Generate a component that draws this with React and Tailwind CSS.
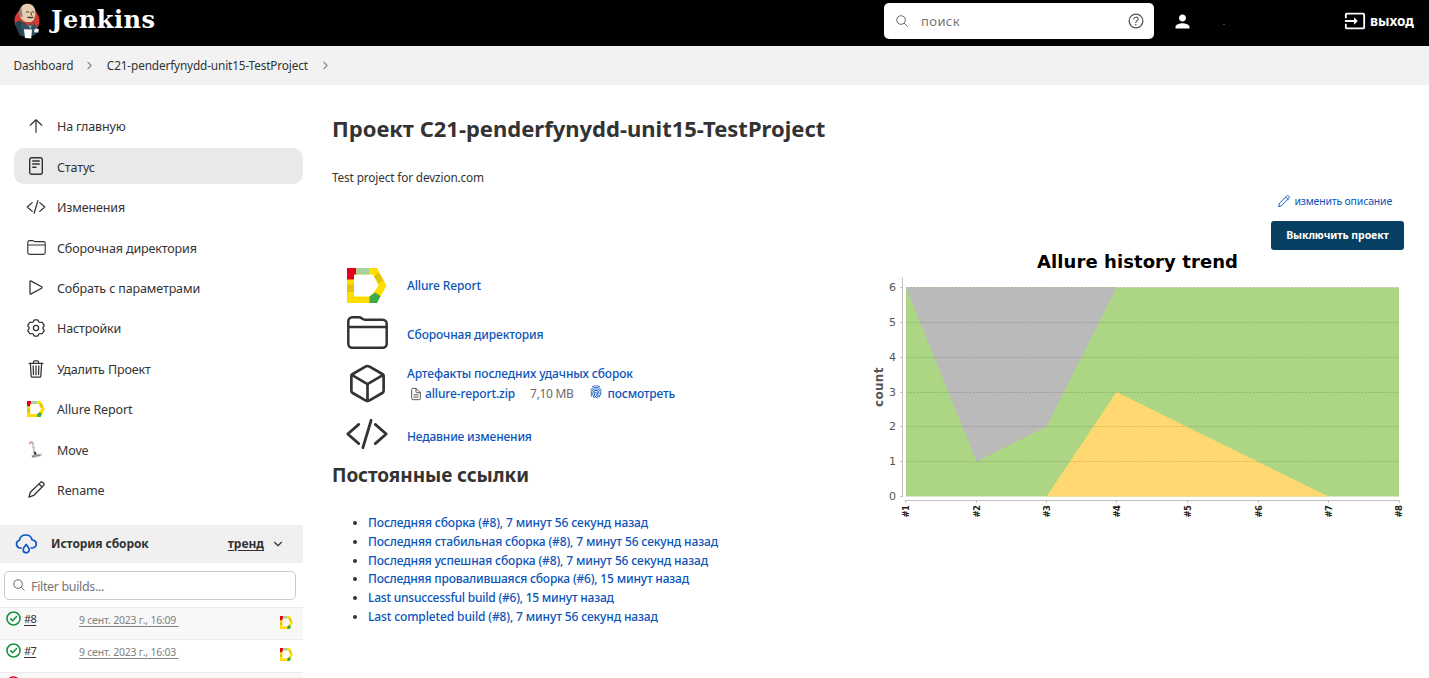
import {
  IoCodeSlashOutline,
  IoCubeOutline,
  IoDocumentTextOutline,
  IoFingerPrint,
  IoHelpCircleOutline,
  IoSearchOutline,
  IoTrashOutline,
} from "react-icons/io5";
import { MdInput, MdPerson } from "react-icons/md";
import { ChevronDown, ChevronRight } from "lucide-react";

function JenkinsLogo() {
  return (
    <svg className="h-9 w-[26px] shrink-0" viewBox="0 0 26 36">
      <ellipse cx="13" cy="17.500" rx="12.500" ry="12.500" fill="#d33833" />
      <path d="M1 21.500 6.500 18l6.500 3 6-2.500 4 5.500-1.500 7.500-6 2.500-8-1Z" fill="#335061" />
      <path d="M1 20.500c2-2 4-3 6-2.500l1 9 1 6.500-4-2Z" fill="#26404f" />
      <path d="M5.500 8C6.500 3 10 .5 13.800.7c5 .3 7.700 3.800 7.600 8.800 0 5-1.400 9.800-6.400 9.800C9 19.500 4.800 14.500 5.500 8Z" fill="#e8cdae" />
      <path d="M4.800 8.500 7.500 4l.3 5L9 13.500l-2 .5C4.800 12 4.500 10 4.800 8.500Z" fill="#8d857b" />
      <path d="M12 9.300q1.800-1.400 3.300 0M17.300 9.300q1.500-1.200 2.800 0M16.800 9.500l1 3.200" fill="none" stroke="#4b3d37" strokeWidth="1" />
      <path d="M12.800 14.700q2-2 3.700-.6 2-1.400 3.500.6l-3.500.8Z" fill="#4a4039" />
      <path d="m12 18.800 4 1.300 3.200-1.800.8 4-3.800-1-3.700 1.500Z" fill="#d33833" />
      <path d="m14 22.500 2.500 3.500 1.500-3.500Z" fill="#8fa5b0" />
      <path d="m10 26.300 8 .2-.8 9-6.200-.5Z" fill="#fff" />
      <path d="M20.500 26q3-1.500 4.500.8l-1 3-4-.5Z" fill="#f0eeec" />
    </svg>
  );
}

function AllureIcon({ className }) {
  return (
    <svg className={className} viewBox="0 0 40 35" preserveAspectRatio="none">
      <path fillRule="evenodd" d="M0 0H30L39.500 17.500 30 35H0ZM7 6.500V28.500H22.500L26.500 25 31.500 17.500 26 6.500Z" fill="#ffdd00" />
      <path d="M0 0H9.200V6.500H7V11.500H0Z" fill="#e2001a" />
      <path d="M9.200 0H22V6.500H9.200Z" fill="#a5d3a0" />
      <path d="M0 16.500H7V24H0Z" fill="#e0c210" />
      <path d="m27 8.500 4.500-4 5 8-4.300 2.700Z" fill="#e0c210" />
      <path d="M22.500 28.500 28 24.500 33.500 28 30 35H22.500Z" fill="#3dab49" />
    </svg>
  );
}

function ArrowUpIcon() {
  return (
    <svg className="h-[14px] w-[14px]" viewBox="0 0 14 14" fill="none" stroke="currentColor" strokeWidth="1.200" strokeLinecap="round" strokeLinejoin="round">
      <path d="M1.200 6.200 7 .8l5.800 5.400M7 1v12.300" />
    </svg>
  );
}

function StatusIcon() {
  return (
    <svg className="h-[18px] w-[14px]" viewBox="0 0 14 18" fill="none" stroke="currentColor" strokeWidth="1.400" strokeLinecap="round">
      <rect x=".7" y=".7" width="12.600" height="16.600" rx="2" />
      <path d="M3.700 4h6.600M3.700 7h6.600M3.700 10.200h3.300" />
    </svg>
  );
}

function FolderIcon({ className }) {
  return (
    <svg className={className} viewBox="0 0 41 33" fill="none" stroke="currentColor" strokeWidth="2.500" strokeLinejoin="round">
      <path d="M1.300 11V5.300a4 4 0 0 1 4-4h6.200q2 0 3.500 1.200 1.500 1.200 3.200 1.200h17.500a4 4 0 0 1 4 4v20a4 4 0 0 1-4 4H5.300a4 4 0 0 1-4-4V11h38.400" />
    </svg>
  );
}

function PlayIcon() {
  return (
    <svg className="h-[15px] w-[14px]" viewBox="0 0 14 15" fill="none" stroke="currentColor" strokeWidth="1.300" strokeLinejoin="round">
      <path d="M1 1.800v11.400q0 1.300 1.200.7L12.600 8.200q1.100-.7 0-1.400L2.200 1.100Q1 .5 1 1.800Z" />
    </svg>
  );
}

function GearIcon() {
  return (
    <svg className="h-[18px] w-[18px] shrink-0" viewBox="0 0 18 18" fill="none" stroke="currentColor" strokeWidth="1.300" strokeLinejoin="round">
      <path d="M7.600.8h2.800q1 .3 1.200 2l1.300.7q1.600-.7 2.500 0l1.700 2.700q.2 1-1.100 2.100v1.400q1.300 1.100 1.100 2.100l-1.700 2.700q-.9.700-2.500 0l-1.300.7q-.2 1.700-1.200 2H7.600q-1-.3-1.200-2l-1.300-.7q-1.600.7-2.500 0L.9 11.800q-.2-1 1.100-2.100V8.300Q.7 7.200.9 6.200l1.700-2.700q.9-.7 2.500 0l1.300-.7q.2-1.700 1.200-2Z" />
      <circle cx="9" cy="9" r="2.600" />
    </svg>
  );
}

function PencilIcon({ className }) {
  return (
    <svg className={className} viewBox="0 0 18 18" fill="none" stroke="currentColor" strokeWidth="1.400" strokeLinecap="round" strokeLinejoin="round">
      <path d="M1 17 2.500 12 13 1.700a2 2 0 0 1 3 0l.4.4a2 2 0 0 1 0 2.700L6 15.300ZM11.700 3.200 15 6.500" />
    </svg>
  );
}

function MoveIcon() {
  return (
    <svg className="h-[18px] w-[16px]" viewBox="0 0 16 18">
      <path d="m4.500 1.500 1.300 6 1.200 7" stroke="#a3a3a0" strokeWidth="2" fill="none" />
      <path d="m4.500 3 1.300 3M5.800 7l1 3" stroke="#eee" strokeWidth="1.200" />
      <path d="M1 3 2.500 1.300 4.500.8" stroke="#d9808c" strokeWidth="1.400" fill="none" />
      <path d="M3.500 14 13.500 12.500v2.500l-9.500 2Z" fill="#b5b5b0" />
      <path d="M6 11h2l.5 2.500H6.300Z" fill="#333" />
      <path d="m4 15.500 8-1.300" stroke="#777" strokeWidth=".8" />
    </svg>
  );
}

function RainIcon() {
  return (
    <svg className="h-5 w-[22px]" viewBox="0 0 22 20" fill="none" stroke="#0b56c4" strokeWidth="1.700" strokeLinecap="round" strokeLinejoin="round">
      <path d="M6.200 14H4.800a4 4 0 0 1-.3-7.800C5 3 7.800 1 11 1s5.500 2 6.200 5a4 4 0 0 1 .2 8h-1.200" />
      <path d="M11.200 10.500q3 3.400 3 5.300a3 3 0 0 1-6 0q0-1.900 3-5.300Z" />
    </svg>
  );
}

function StatusBadge({ failed }) {
  return (
    <svg className="mt-[3px] h-[15px] w-[15px] shrink-0" viewBox="0 0 15 15" fill="none" stroke={failed ? "#e6001f" : "#1b9145"} strokeWidth="1.600" strokeLinecap="round" strokeLinejoin="round">
      <circle cx="7.500" cy="7.500" r="6.500" />
      <path d={failed ? "m5.200 5.200 4.600 4.600m0-4.600-4.600 4.600" : "m4.700 7.800 1.900 1.900 3.800-4"} />
    </svg>
  );
}

const menu = [
  { label: "На главную", icon: <ArrowUpIcon /> },
  { label: "Статус", icon: <StatusIcon />, active: true },
  { label: "Изменения", icon: <IoCodeSlashOutline className="h-5 w-5" /> },
  { label: "Сборочная директория", icon: <FolderIcon className="h-[15px] w-[19px]" /> },
  { label: "Собрать с параметрами", icon: <PlayIcon /> },
  { label: "Настройки", icon: <GearIcon /> },
  { label: "Удалить Проект", icon: <IoTrashOutline className="h-5 w-5" /> },
  { label: "Allure Report", icon: <AllureIcon className="h-4 w-[18px]" /> },
  { label: "Move", icon: <MoveIcon /> },
  { label: "Rename", icon: <PencilIcon className="h-[17px] w-[17px]" /> },
];

const builds = [
  { id: "#8", date: "9 сент. 2023 г., 16:09", alt: true },
  { id: "#7", date: "9 сент. 2023 г., 16:03", alt: false },
];

const permalinks = [
  { text: "Последняя сборка (#8), 7 минут 56 секунд назад", tracking: "tracking-[-0.12px]" },
  { text: "Последняя стабильная сборка (#8), 7 минут 56 секунд назад", tracking: "tracking-[-0.13px]" },
  { text: "Последняя успешная сборка (#8), 7 минут 56 секунд назад", tracking: "tracking-[-0.13px]" },
  { text: "Последняя провалившаяся сборка (#6), 15 минут назад", tracking: "tracking-[-0.18px]" },
  { text: "Last unsuccessful build (#6), 15 минут назад", tracking: "tracking-[-0.22px]" },
  { text: "Last completed build (#8), 7 минут 56 секунд назад", tracking: "tracking-[-0.13px]" },
];

function Header() {
  return (
    <header className="flex h-[46px] items-start bg-black text-white">
      <div className="flex items-center pt-[3px] pl-[14px]">
        <JenkinsLogo />
        <span className="-mt-0.5 ml-[11px] font-['DejaVu_Serif',serif] text-[24px] leading-8 font-bold tracking-[0.55px]">Jenkins</span>
      </div>
      <div className="mt-[3px] ml-auto flex h-9 w-[270px] items-center rounded-[5px] bg-white pr-2 pl-[11px] text-[#4d545d]">
        <IoSearchOutline className="h-[14px] w-[14px]" />
        <span className="mt-px ml-3 flex-1 text-[13px] tracking-[0.4px] text-[#757575]">поиск</span>
        <IoHelpCircleOutline className="h-5 w-5" />
      </div>
      <MdPerson className="mt-[11px] ml-[18px] h-[21px] w-[21px]" />
      <span className="mt-6 ml-[30px] h-px w-0.5 bg-[#444]" />
      <div className="mt-[11px] ml-[119px] flex h-5 w-[85px] items-center">
        <MdInput className="h-[22px] w-[22px] shrink-0" />
        <span className="ml-1 text-[13.5px] font-bold">выход</span>
      </div>
    </header>
  );
}

function Sidebar() {
  return (
    <aside className="w-[303px] shrink-0 pt-[23px]">
      <nav className="flex flex-col gap-[4.45px] pl-[14px]">
        {menu.map((item) => (
          <div
            key={item.label}
            className={
              "flex h-9 items-center rounded-[10px] pl-3 text-[12.5px] tracking-[-0.13px] " +
              (item.active ? "bg-[#e9e9e9]" : "")
            }
          >
            <span className="flex w-5 justify-center">{item.icon}</span>
            <span className="ml-[11px] pt-[3.3px]">{item.label}</span>
          </div>
        ))}
      </nav>

      <div className="mt-[17px] flex h-[38px] items-center bg-[#f0f0f0] pr-[18px] pl-[15px] text-[12px] font-bold">
        <RainIcon />
        <span className="ml-[14px] tracking-[-0.1px]">История сборок</span>
        <span className="ml-auto underline underline-offset-2">тренд</span>
        <ChevronDown className="ml-[7px] h-[14px] w-[14px]" />
      </div>

      <div className="mt-2 ml-1 flex h-[29px] w-[292px] items-center rounded-[5px] border border-[#c3ccd1] pl-[7px] text-[12.5px] tracking-[-0.35px] text-[#757575]">
        <IoSearchOutline className="h-[14px] w-[14px] text-[#4d545d]" />
        <span className="mt-[3px] ml-[5px]">Filter builds...</span>
      </div>

      <div className="mt-[7px]">
        {builds.map((b) => (
          <div
            key={b.id}
            className={"flex h-[32.5px] items-start border-t border-[#ececec] pl-[6px] " + (b.alt ? "bg-[#f8f8f8]" : "bg-white")}
          >
            <StatusBadge />
            <span className="mt-[3px] ml-[3px] w-[55px] text-[11px] leading-4 tracking-[-0.6px]">
              <span className="underline underline-offset-2">{b.id}</span>
            </span>
            <span className="mt-1 text-[10.5px] leading-4 tracking-[-0.23px] whitespace-pre text-[#808080] underline underline-offset-2">
              {b.date + " "}
            </span>
            <AllureIcon className="mt-2 mr-[10px] ml-auto h-[13px] w-[13px]" />
          </div>
        ))}
        <div className="flex h-[33px] items-start border-t border-[#ececec] bg-[#f8f8f8] pl-[6px]">
          <StatusBadge failed />
        </div>
      </div>
    </aside>
  );
}

const xs = [35.5, 106.5, 176.5, 246.5, 317.5, 388.5, 458.5, 529];
const ys = [246.5, 211.5, 176.5, 142, 107, 72.5, 37.5];

function TrendChart() {
  return (
    <svg className="block h-[275px] w-[559px]" viewBox="0 0 559 275" fontFamily="'DejaVu Sans', sans-serif">
      <text x="267.500" y="18" textAnchor="middle" fontSize="18" fontWeight="bold" textLength="201">
        Allure history trend
      </text>
      <text transform="translate(12.500 157) rotate(-90)" fontSize="12" fontWeight="bold" fill="#555" textLength="39.500">
        count
      </text>
      <path d="M36 37.500H529V246.500H36Z" fill="#add684" />
      <path d="M36 37.500H246.500L176.500 176.500 106.500 211.500Z" fill="#bababa" />
      <path d="M176.500 246.500 246.500 142 458.500 246.500Z" fill="#ffd872" />
      <g stroke="#000" strokeOpacity=".14" strokeDasharray="2.200 1.300">
        {ys.slice(1).map((y) => (
          <path key={y} d={`M36 ${Math.floor(y)}.5H529`} />
        ))}
      </g>
      <path d="M32.500 27.500V246.500M35 250.500H529" stroke="#c0c0c0" fill="none" />
      {ys.map((y, i) => (
        <g key={i}>
          <path d={`M30.500 ${Math.floor(y)}.5h2`} stroke="#b0b0b0" />
          <text x="26" y={y + 3.7} textAnchor="end" fontSize="11" fill="#555">
            {i}
          </text>
        </g>
      ))}
      {xs.map((x, i) => (
        <g key={i}>
          <path d={`M${Math.floor(x)}.5 250.500v2`} stroke="#b0b0b0" />
          <text transform={`translate(${x + 3.2} 267.500) rotate(-90)`} fontSize="8.500" fontWeight="bold" fill="#222" textLength="12.500">
            {"#" + (i + 1)}
          </text>
        </g>
      ))}
    </svg>
  );
}

function Row({ icon, className, children }) {
  return (
    <div className={"flex items-center " + className}>
      <span className="flex w-10 shrink-0 justify-center text-[#333]">{icon}</span>
      <div className="ml-5 text-[12px] leading-[19px] font-medium tracking-[-0.13px] text-[#0b54b8]">{children}</div>
    </div>
  );
}

function Main() {
  return (
    <main className="flex-1 pl-[29px]">
      <h1 className="mt-[27px] text-[22px] leading-8 font-bold whitespace-nowrap">Проект C21-penderfynydd-unit15-TestProject</h1>
      <p className="mt-6 text-[11.8px] leading-[18px] tracking-[-0.14px]">Test project for devzion.com</p>
      <div className="flex">
        <div className="w-[538px] shrink-0 pt-[79px]">
          <div className="pl-[15px]">
            <Row className="h-[41px]" icon={<AllureIcon className="h-[35px] w-10" />}>
              Allure Report
            </Row>
            <Row className="h-[52px]" icon={<FolderIcon className="h-[33px] w-[41px] shrink-0" />}>
              <div className="pt-1">Сборочная директория</div>
            </Row>
            <Row className="h-[50px]" icon={<IoCubeOutline className="h-[43px] w-[43px] shrink-0" />}>
              <div className="pt-px">Артефакты последних удачных сборок</div>
              <div className="flex items-center pt-px">
                <IoDocumentTextOutline className="ml-0.5 h-[14px] w-[14px] text-[#444]" />
                <span className="ml-0.5">allure-report.zip</span>
                <span className="ml-[15px] font-normal tracking-[-0.3px] text-[#6b6b6b]">7,10 MB</span>
                <IoFingerPrint className="mb-1 ml-[15px] h-[14px] w-[14px]" />
                <span className="ml-[5px] tracking-[-0.2px]">посмотреть</span>
              </div>
            </Row>
            <Row className="h-[52px]" icon={<IoCodeSlashOutline className="h-[44px] w-[44px] shrink-0" />}>
              <div className="pt-1 tracking-[-0.18px]">Недавние изменения</div>
            </Row>
          </div>
          <h2 className="mt-px text-[19px] leading-7 font-bold tracking-[-0.08px]">Постоянные ссылки</h2>
          <ul className="mt-[25px] list-disc pl-9 text-[12px] leading-[18.8px] font-medium">
            {permalinks.map((p) => (
              <li key={p.text}>
                <span className={"text-[#0b54b8] " + p.tracking}>{p.text}</span>
              </li>
            ))}
          </ul>
        </div>
        <div className="flex w-[559px] shrink-0 flex-col">
          <div className="flex flex-col items-end pt-[7px] pr-[25px]">
            <div className="mr-3 flex h-4 items-center text-[10.5px] tracking-[-0.18px] text-[#0b54b8]">
              <PencilIcon className="mr-1 h-3 w-3" />
              <span className="pt-0.5">изменить описание</span>
            </div>
            <button className="mt-3 h-[29px] w-[133px] rounded-[3px] bg-[#063f61] text-[10.5px] font-bold tracking-[-0.07px] text-white">
              Выключить проект
            </button>
          </div>
          <TrendChart />
        </div>
      </div>
    </main>
  );
}

export default function App() {
  return (
    <div className="h-[678px] w-[1429px] overflow-hidden bg-white font-['Noto_Sans','Open_Sans',sans-serif] text-[#333]">
      <Header />
      <div className="flex h-[39px] items-center bg-[#f2f2f2] pl-[13.5px] text-[11.8px] tracking-[-0.14px]">
        <span>Dashboard</span>
        <ChevronRight className="mr-[10.5px] ml-[10px] h-[13px] w-[13px] text-[#888]" strokeWidth={2} />
        <span>C21-penderfynydd-unit15-TestProject</span>
        <ChevronRight className="mx-[11px] h-[13px] w-[13px] text-[#888]" strokeWidth={2} />
      </div>
      <div className="flex">
        <Sidebar />
        <Main />
      </div>
    </div>
  );
}
